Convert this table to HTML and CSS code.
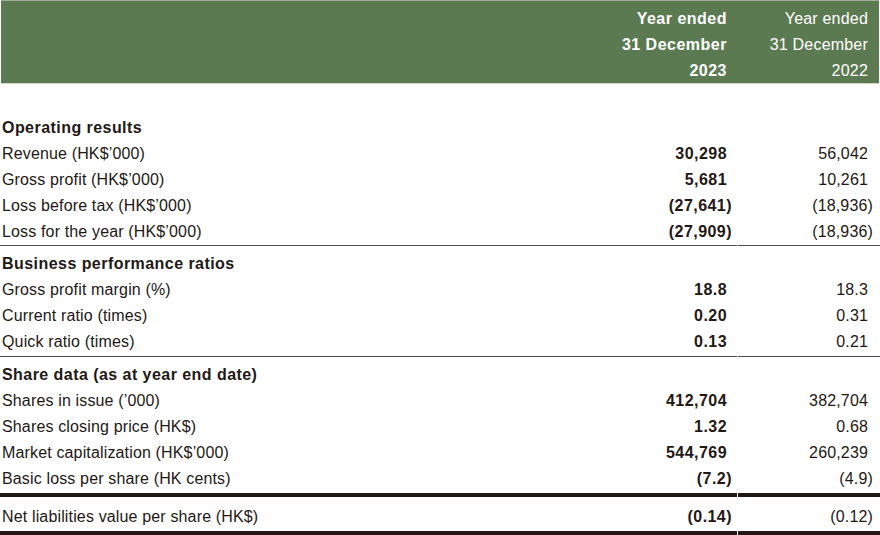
FILE: index.html
```html
<!DOCTYPE html>
<html lang="en">
<head>
<meta charset="utf-8">
<title>Financial highlights</title>
<link rel="stylesheet" href="styles.css">
</head>
<body>
<div class="sheet">
  <div class="head">
    <div class="hcell"></div>
    <div class="hcell cur">Year ended<br>31 December<br>2023</div>
    <div class="hcell prev">Year ended<br>31 December<br>2022</div>
  </div>

  <div class="group first">
    <div class="row sec"><span class="lbl">Operating results</span><span class="cur"></span><span class="prev"></span></div>
    <div class="row"><span class="lbl">Revenue (HK$’000)</span><span class="cur">30,298</span><span class="prev">56,042</span></div>
    <div class="row"><span class="lbl">Gross profit (HK$’000)</span><span class="cur">5,681</span><span class="prev">10,261</span></div>
    <div class="row"><span class="lbl">Loss before tax (HK$’000)</span><span class="cur"><span class="neg">(27,641)</span></span><span class="prev"><span class="neg">(18,936)</span></span></div>
    <div class="row end e1"><span class="lbl">Loss for the year (HK$’000)</span><span class="cur"><span class="neg">(27,909)</span></span><span class="prev"><span class="neg">(18,936)</span></span></div>
  </div>

  <div class="group">
    <div class="row sec"><span class="lbl">Business performance ratios</span><span class="cur"></span><span class="prev"></span></div>
    <div class="row"><span class="lbl">Gross profit margin (%)</span><span class="cur">18.8</span><span class="prev">18.3</span></div>
    <div class="row"><span class="lbl">Current ratio (times)</span><span class="cur">0.20</span><span class="prev">0.31</span></div>
    <div class="row end e2"><span class="lbl">Quick ratio (times)</span><span class="cur">0.13</span><span class="prev">0.21</span></div>
  </div>

  <div class="group">
    <div class="row sec"><span class="lbl">Share data (as at year end date)</span><span class="cur"></span><span class="prev"></span></div>
    <div class="row"><span class="lbl">Shares in issue (’000)</span><span class="cur">412,704</span><span class="prev">382,704</span></div>
    <div class="row"><span class="lbl">Shares closing price (HK$)</span><span class="cur">1.32</span><span class="prev">0.68</span></div>
    <div class="row"><span class="lbl">Market capitalization (HK$’000)</span><span class="cur">544,769</span><span class="prev">260,239</span></div>
    <div class="row end e3"><span class="lbl">Basic loss per share (HK cents)</span><span class="cur"><span class="neg">(7.2)</span></span><span class="prev"><span class="neg">(4.9)</span></span></div>
  </div>

  <div class="group last">
    <div class="row end e4"><span class="lbl">Net liabilities value per share (HK$)</span><span class="cur"><span class="neg">(0.14)</span></span><span class="prev"><span class="neg">(0.12)</span></span></div>
  </div>
</div>
</body>
</html>
```

FILE: styles.css
```css
html, body {
  margin: 0;
  padding: 0;
  background: #ffffff;
}

body {
  font-family: "Liberation Sans", Arial, Helvetica, sans-serif;
  font-size: 16px;
  color: #231815;
  width: 880px;
}

.sheet {
  display: flex;
  flex-direction: column;
}

.head {
  display: grid;
  grid-template-columns: 1fr 160px 142px;
  margin: 0 1px;
  padding-top: 5px;
  height: 77px;
  background: #5c7a51;
  border-top: 1px solid #a2ad9b;
  border-bottom: 1px solid #d0d9cc;
  color: #ffffff;
  line-height: 26px;
}

.hcell {
  text-align: right;
}

.hcell.cur {
  font-weight: bold;
  letter-spacing: 0.5px;
  padding-right: 10px;
}

.hcell.prev {
  letter-spacing: 0.2px;
  padding-right: 11px;
}

.group.first {
  margin-top: 31px;
}

.row {
  display: grid;
  grid-template-columns: 1fr 160px 143px;
  line-height: 26px;
  letter-spacing: 0.15px;
}

.lbl {
  padding-left: 2px;
  white-space: nowrap;
}

.row .cur {
  text-align: right;
  padding-right: 10px;
  font-weight: bold;
  letter-spacing: 0.45px;
}

.row .prev {
  text-align: right;
  padding-right: 12px;
  margin-left: 1px;
}

.row.sec {
  font-weight: bold;
  letter-spacing: 0.45px;
  padding-top: 5px;
}

.group.first .row.sec {
  padding-top: 0;
}

.neg {
  display: inline-block;
  margin-right: -5px;
}

.row.end > span {
  border-bottom: 1px solid #4c4c4c;
}

.row.e2 > span {
  padding-bottom: 1px;
}

.row.e3 > span {
  padding-bottom: 1px;
  border-bottom: 4px solid #231815;
}

.row.e4 {
  padding-top: 7px;
}

.row.e4 > span {
  padding-bottom: 1px;
  border-bottom: 4px solid #231815;
}
```
